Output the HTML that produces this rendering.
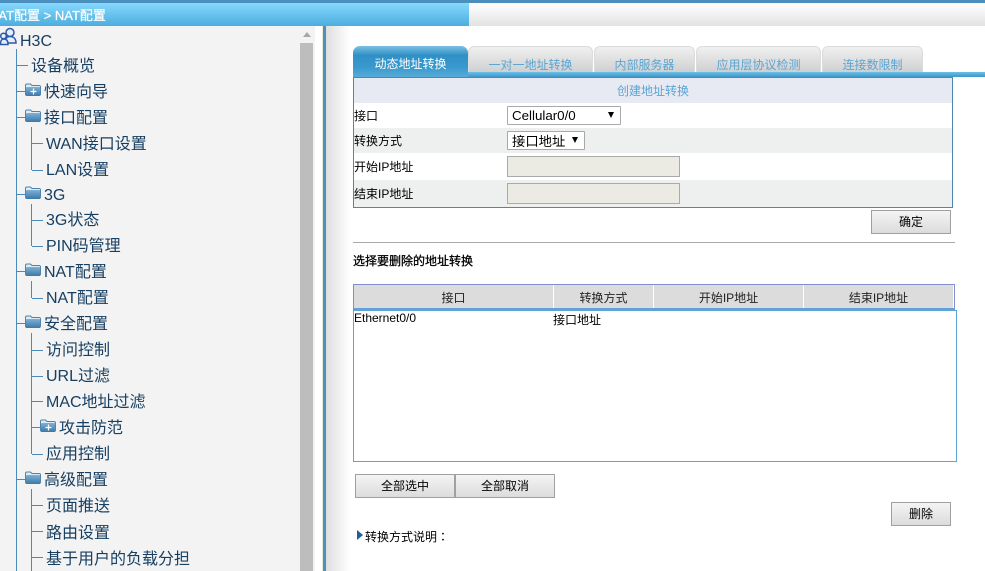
<!DOCTYPE html>
<html lang="zh-CN">
<head>
<meta charset="utf-8">
<title>NAT配置</title>
<style>
html,body{margin:0;padding:0;width:985px;height:571px;overflow:hidden;background:#fff}
body{position:relative;font-family:"Liberation Sans","Noto Sans CJK SC",sans-serif;font-size:12px;color:#000}
.a{position:absolute;white-space:nowrap}
.bar{position:absolute;left:0;top:3px;height:23px;background:linear-gradient(#fff,#f6f6f8 35%,#e2e2e2)}
.t{position:absolute;font-size:16px;line-height:20px;color:#173f62;white-space:nowrap}
.h{position:absolute;height:1px;background:#4b8ab8}
.v{position:absolute;width:1px;background:#4b8ab8}
.tab{position:absolute;top:46px;height:26px;box-sizing:border-box;border:1px solid #dcdcdc;border-bottom:0;border-radius:6px 6px 0 0;background:linear-gradient(#f0f0f0,#cfd0d2);text-align:center;line-height:37px;color:#5aa5d2;overflow:hidden}
.btn{position:absolute;box-sizing:border-box;height:24px;border:1px solid #a0a0a0;background:linear-gradient(#f4f4f4,#dcdcdc);text-align:center;line-height:23px;color:#000}
.th{position:absolute;top:285px;height:24px;background:#dcdcdc;text-align:center;line-height:26px;border-right:1px solid #fff;box-sizing:border-box;color:#222}
.row{position:absolute;left:354px;width:598px}
.lab{position:absolute;left:354px;line-height:16px}
.sel{position:absolute;box-sizing:border-box;height:19px;border:1px solid #a8a8a8;background:#fff;line-height:18px;border-radius:1px;font-size:13.33px}
.inp{position:absolute;left:507px;width:173px;box-sizing:border-box;height:21px;border:1px solid #aaa;background:#ebebe4}
</style>
</head>
<body>
<div class="a" style="left:0;top:0;width:985px;height:3px;background:#4a8fbd"></div>
<div class="bar" style="width:985px"></div>
<div class="a" style="left:0;top:3px;width:469px;height:23px;background:linear-gradient(#86d8fd,#4cadde);color:#fff;font-size:13px;line-height:26px;overflow:hidden;-webkit-text-stroke:.2px #fff"><span style="margin-left:-11px">NAT配置 &gt; NAT配置</span></div>

<div class="a" style="left:0;top:26px;width:315px;height:545px;background:#f3f3f3"></div>
<div class="a" style="left:322px;top:26px;width:1px;height:545px;background:#eeeadb"></div>
<div class="a" style="left:323px;top:26px;width:3px;height:545px;background:#4f8fbb"></div>
<div class="a" style="left:326px;top:26px;width:24px;height:545px;background:linear-gradient(90deg,#dedede,#fff)"></div>

<div class="a" style="left:300px;top:43px;width:13px;height:528px;background:#bdbdbd"></div>
<div class="a" style="left:303px;top:32px;width:0;height:0;border-left:4px solid transparent;border-right:4px solid transparent;border-bottom:5px solid #a8a8a8"></div>

<svg class="a" style="left:0;top:27px" width="18" height="19" viewBox="0 0 18 19" fill="#e6eefa" stroke="#2c5aa8" stroke-width="1.500"><circle cx="10" cy="5.500" r="4"/><path d="M5 16c0-5 2-6.500 5-6.500s6 1.500 6 6.500z"/><circle cx="3.500" cy="9" r="2.800"/><path d="M.5 17.500c0-4 1-5.500 3.500-5.500s4 1.500 4 5.500z"/></svg>

<div class="v" style="left:16px;top:49px;height:522px"></div>
<div class="h" style="left:17px;top:65px;width:11px"></div>
<div class="h" style="left:17px;top:91px;width:9px"></div>
<div class="h" style="left:17px;top:117px;width:9px"></div>
<div class="h" style="left:17px;top:194px;width:9px"></div>
<div class="h" style="left:17px;top:271px;width:9px"></div>
<div class="h" style="left:17px;top:323px;width:9px"></div>
<div class="h" style="left:17px;top:479px;width:9px"></div>

<div class="v" style="left:31px;top:127px;height:43px"></div>
<div class="h" style="left:32px;top:143px;width:11px"></div>
<div class="h" style="left:32px;top:170px;width:11px"></div>
<div class="v" style="left:31px;top:204px;height:42px"></div>
<div class="h" style="left:32px;top:220px;width:11px"></div>
<div class="h" style="left:32px;top:246px;width:11px"></div>
<div class="v" style="left:31px;top:281px;height:17px"></div>
<div class="h" style="left:32px;top:298px;width:11px"></div>
<div class="v" style="left:31px;top:333px;height:121px"></div>
<div class="h" style="left:32px;top:350px;width:11px"></div>
<div class="h" style="left:32px;top:376px;width:11px"></div>
<div class="h" style="left:32px;top:401px;width:11px"></div>
<div class="h" style="left:32px;top:427px;width:9px"></div>
<div class="h" style="left:32px;top:454px;width:11px"></div>
<div class="v" style="left:31px;top:489px;height:82px"></div>
<div class="h" style="left:32px;top:505px;width:11px"></div>
<div class="h" style="left:32px;top:531px;width:11px"></div>
<div class="h" style="left:32px;top:557px;width:11px"></div>

<svg width="0" height="0" style="position:absolute"><defs>
<linearGradient id="f" x1="0" y1="0" x2="0" y2="1"><stop offset="0" stop-color="#7fb0d4"/><stop offset="1" stop-color="#3a78a8"/></linearGradient>
</defs></svg>
<svg class="a" style="left:25px;top:83px" width="16" height="14" viewBox="0 0 16 14"><path d="M.5 11V2.500Q.5 1 2 1h3.500L7 2.500h7Q15.500 2.500 15.500 4v7q0 1.500-1.500 1.500H2Q.5 12.500.5 11z" fill="#dfeaf3" stroke="#4b84ae"/><rect x="1" y="4" width="14" height="9" rx="1" fill="url(#f)"/><path d="M8.500 5.500v6M5.500 8.500h6" stroke="#fff" stroke-width="1.300"/></svg>
<svg class="a" style="left:25px;top:109px" width="16" height="14" viewBox="0 0 16 14"><path d="M.5 11V2.500Q.5 1 2 1h3.500L7 2.500h7Q15.500 2.500 15.500 4v7q0 1.500-1.500 1.500H2Q.5 12.500.5 11z" fill="#dfeaf3" stroke="#4b84ae"/><rect x="1" y="4" width="14" height="9" rx="1" fill="url(#f)"/></svg>
<svg class="a" style="left:25px;top:186px" width="16" height="14" viewBox="0 0 16 14"><path d="M.5 11V2.500Q.5 1 2 1h3.500L7 2.500h7Q15.500 2.500 15.500 4v7q0 1.500-1.500 1.500H2Q.5 12.500.5 11z" fill="#dfeaf3" stroke="#4b84ae"/><rect x="1" y="4" width="14" height="9" rx="1" fill="url(#f)"/></svg>
<svg class="a" style="left:25px;top:263px" width="16" height="14" viewBox="0 0 16 14"><path d="M.5 11V2.500Q.5 1 2 1h3.500L7 2.500h7Q15.500 2.500 15.500 4v7q0 1.500-1.500 1.500H2Q.5 12.500.5 11z" fill="#dfeaf3" stroke="#4b84ae"/><rect x="1" y="4" width="14" height="9" rx="1" fill="url(#f)"/></svg>
<svg class="a" style="left:25px;top:315px" width="16" height="14" viewBox="0 0 16 14"><path d="M.5 11V2.500Q.5 1 2 1h3.500L7 2.500h7Q15.500 2.500 15.500 4v7q0 1.500-1.500 1.500H2Q.5 12.500.5 11z" fill="#dfeaf3" stroke="#4b84ae"/><rect x="1" y="4" width="14" height="9" rx="1" fill="url(#f)"/></svg>
<svg class="a" style="left:40px;top:419px" width="16" height="14" viewBox="0 0 16 14"><path d="M.5 11V2.500Q.5 1 2 1h3.500L7 2.500h7Q15.500 2.500 15.500 4v7q0 1.500-1.500 1.500H2Q.5 12.500.5 11z" fill="#dfeaf3" stroke="#4b84ae"/><rect x="1" y="4" width="14" height="9" rx="1" fill="url(#f)"/><path d="M8.500 5.500v6M5.500 8.500h6" stroke="#fff" stroke-width="1.300"/></svg>
<svg class="a" style="left:25px;top:471px" width="16" height="14" viewBox="0 0 16 14"><path d="M.5 11V2.500Q.5 1 2 1h3.500L7 2.500h7Q15.500 2.500 15.500 4v7q0 1.500-1.500 1.500H2Q.5 12.500.5 11z" fill="#dfeaf3" stroke="#4b84ae"/><rect x="1" y="4" width="14" height="9" rx="1" fill="url(#f)"/></svg>

<div class="t" style="left:20px;top:32px">H3C</div>
<div class="t" style="left:31px;top:57px">设备概览</div>
<div class="t" style="left:44px;top:83px">快速向导</div>
<div class="t" style="left:44px;top:109px">接口配置</div>
<div class="t" style="left:46px;top:135px">WAN接口设置</div>
<div class="t" style="left:46px;top:161px">LAN设置</div>
<div class="t" style="left:44px;top:186px">3G</div>
<div class="t" style="left:46px;top:211px">3G状态</div>
<div class="t" style="left:46px;top:237px">PIN码管理</div>
<div class="t" style="left:44px;top:263px">NAT配置</div>
<div class="t" style="left:46px;top:289px">NAT配置</div>
<div class="t" style="left:44px;top:315px">安全配置</div>
<div class="t" style="left:46px;top:341px">访问控制</div>
<div class="t" style="left:46px;top:367px">URL过滤</div>
<div class="t" style="left:46px;top:393px">MAC地址过滤</div>
<div class="t" style="left:59px;top:419px">攻击防范</div>
<div class="t" style="left:46px;top:445px">应用控制</div>
<div class="t" style="left:44px;top:471px">高级配置</div>
<div class="t" style="left:46px;top:497px">页面推送</div>
<div class="t" style="left:46px;top:524px">路由设置</div>
<div class="t" style="left:46px;top:550px">基于用户的负载分担</div>

<div class="tab" style="left:468px;width:125px">一对一地址转换</div>
<div class="tab" style="left:594px;width:101px">内部服务器</div>
<div class="tab" style="left:696px;width:125px">应用层协议检测</div>
<div class="tab" style="left:822px;width:101px">连接数限制</div>
<div class="a" style="left:353px;top:72px;width:632px;height:5px;background:linear-gradient(#6cc0e6,#3f97c8)"></div>
<div class="a" style="left:353px;top:46px;width:115px;height:31px;box-sizing:border-box;border-radius:7px 7px 0 0;background:linear-gradient(#7cc0e2,#2f90c6 30%,#3a9ace 70%,#58abd6);color:#fff;text-align:center;line-height:37px">动态地址转换</div>

<div class="a" style="left:353px;top:77px;width:600px;height:131px;box-sizing:border-box;border:1px solid #4f87ab;background:#fff"></div>
<div class="row" style="top:78px;height:25px;background:#e7eaf3;text-align:center;line-height:26px;color:#5aa5d2">创建地址转换</div>
<div class="row" style="top:128px;height:25px;background:#eeefef"></div>
<div class="row" style="top:180px;height:27px;background:#eeefef"></div>
<div class="lab" style="top:108px">接口</div>
<div class="lab" style="top:133px">转换方式</div>
<div class="lab" style="top:159px">开始IP地址</div>
<div class="lab" style="top:186px">结束IP地址</div>
<div class="sel" style="left:507px;top:106px;width:114px;padding-left:4px">Cellular0/0<span class="a" style="left:100px;top:5px;width:0;height:0;border-left:3.500px solid transparent;border-right:3.500px solid transparent;border-top:6px solid #000"></span></div>
<div class="sel" style="left:507px;top:131px;width:78px;padding-left:4px;line-height:20px">接口地址<span class="a" style="left:64px;top:5px;width:0;height:0;border-left:3.500px solid transparent;border-right:3.500px solid transparent;border-top:6px solid #000"></span></div>
<div class="inp" style="top:156px"></div>
<div class="inp" style="top:183px"></div>
<div class="btn" style="left:871px;top:210px;width:80px">确定</div>
<div class="a" style="left:353px;top:242px;width:602px;height:1px;background:#aaa"></div>
<div class="a" style="left:353px;top:253px;line-height:16px;-webkit-text-stroke:.3px #000">选择要删除的地址转换</div>

<div class="a" style="left:353px;top:284px;width:602px;height:26px;box-sizing:border-box;border:1px solid #7f8fcf;border-bottom:0;background:#fff"></div>
<div class="th" style="left:354px;width:200px">接口</div>
<div class="th" style="left:554px;width:100px">转换方式</div>
<div class="th" style="left:654px;width:150px">开始IP地址</div>
<div class="th" style="left:804px;width:150px">结束IP地址</div>
<div class="a" style="left:354px;top:308px;width:600px;height:2px;background:#6a9ddb"></div>
<div class="a" style="left:353px;top:310px;width:604px;height:152px;box-sizing:border-box;border:1px solid #58a6d6;background:#fff"></div>
<div class="a" style="left:354px;top:310px;line-height:16px">Ethernet0/0</div>
<div class="a" style="left:553px;top:312px;line-height:16px">接口地址</div>

<div class="btn" style="left:355px;top:474px;width:100px">全部选中</div>
<div class="btn" style="left:455px;top:474px;width:100px">全部取消</div>
<div class="btn" style="left:891px;top:502px;width:60px">删除</div>
<div class="a" style="left:357px;top:530px;width:0;height:0;border-top:5.500px solid transparent;border-bottom:5.500px solid transparent;border-left:6px solid #1a5f9e"></div>
<div class="a" style="left:365px;top:529px;line-height:16px">转换方式说明<span style="font-family:'Noto Sans CJK TC',sans-serif" lang="zh-TW">：</span></div>
</body>
</html>
